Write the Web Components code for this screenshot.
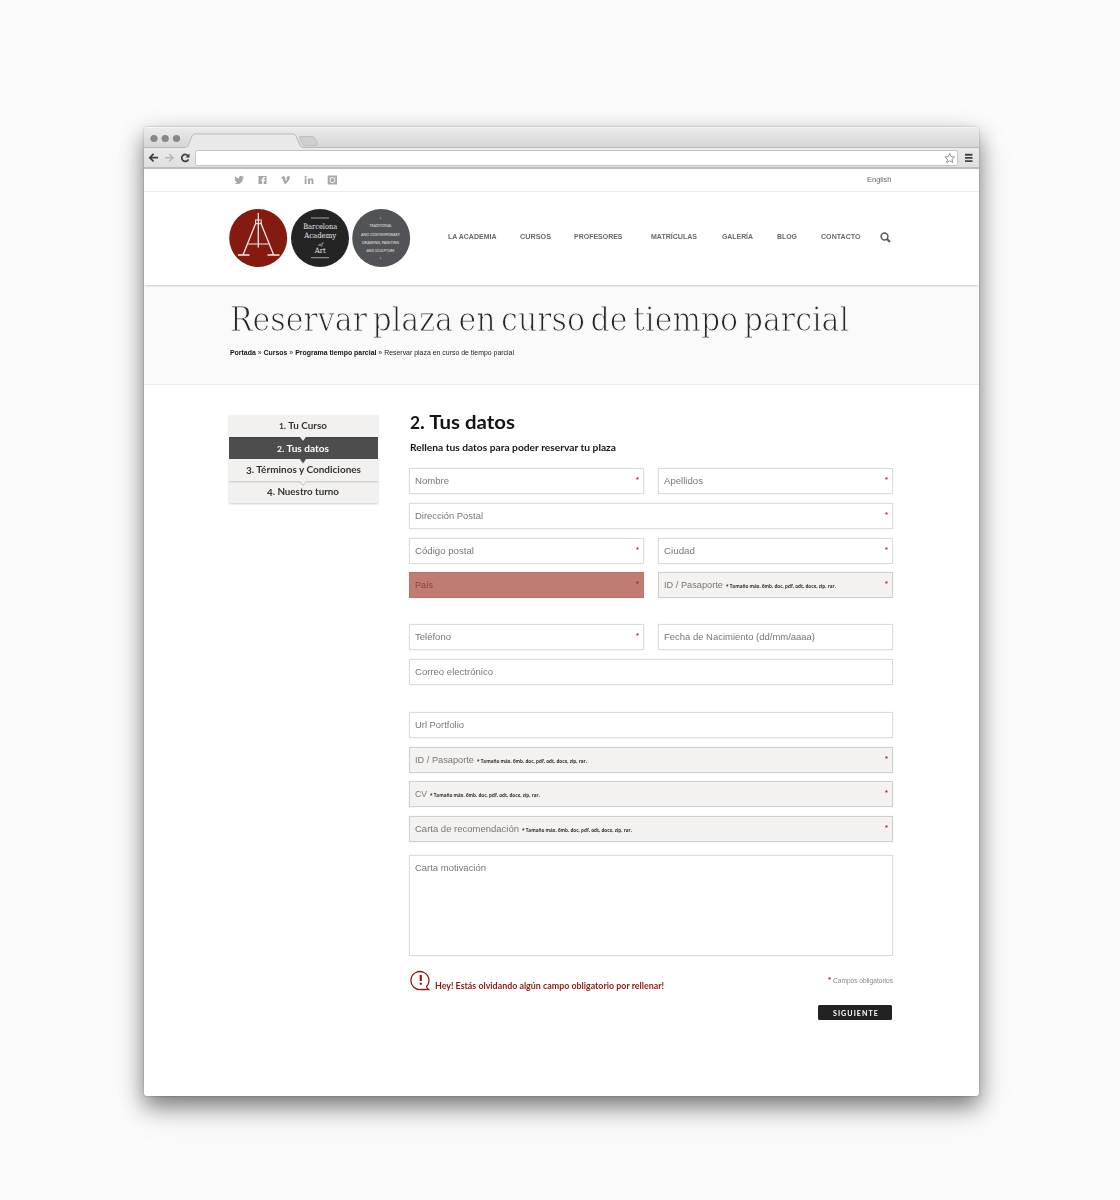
<!DOCTYPE html>
<html lang="es"><head><meta charset="utf-8"><title>Barcelona Academy of Art</title>
<style>
html,body{margin:0;height:1200px;overflow:hidden;background:#fbfbfb}
body{font-family:"Liberation Sans",Arial,sans-serif;padding:127px 0 0 144px;box-sizing:border-box}
</style></head><body>
<browser-window>
  <social-bar></social-bar>
  <site-header></site-header>
  <page-title></page-title>
  <main-content></main-content>
</browser-window>
<script>
const define=(name,html,after)=>customElements.define(name,class extends HTMLElement{
  constructor(){super();this.attachShadow({mode:'open'})}
  connectedCallback(){
    if(this.shadowRoot.childNodes.length)return;
    this.shadowRoot.innerHTML=typeof html==='function'?html(this):html;
    if(after)after(this);
  }
});

/* Text set to an exact width, scaled horizontally from its natural width. */
define('fit-text',`<style>:host{display:inline-block;white-space:nowrap;flex:none}span{display:inline-block;transform-origin:0 50%}</style><span><slot></slot></span>`,el=>{
  const w=+el.getAttribute('w'),s=el.shadowRoot.querySelector('span');
  const n=s.getBoundingClientRect().width;
  el.style.width=w+'px';
  if(n)s.style.transform=`scaleX(${w/n})`;
});

define('browser-chrome',`<style>
:host{display:block;height:41.500px;box-sizing:border-box;border-bottom:2px solid #bdbdbd;background:#e8e8e8;border-radius:3px 3px 0 0;overflow:hidden}
svg{display:block}</style>
<svg width="835" height="40" viewBox="0 0 835 40">
<defs><linearGradient id="a" x2="0" y2="1"><stop stop-color="#ececec"/><stop offset="1" stop-color="#d6d6d6"/></linearGradient>
<linearGradient id="b" x2="0" y2="1"><stop stop-color="#ebebeb"/><stop offset="1" stop-color="#dfdfdf"/></linearGradient></defs>
<rect width="835" height="20" fill="url(#a)"/><path d="M2 .5H833" stroke="#f5f5f5"/>
<rect y="20" width="835" height="20" fill="url(#b)"/>
<path d="M0 20.500H41.500C43.500 20.500 44 19 44.500 17.500L48 9Q49 7 51 7H149Q151 7 152 9L156 18.500Q157 20.500 159 20.500H835" fill="#e9e9e9" stroke="#b9b9b9"/>
<path d="M42 21.500H158" stroke="#e9e9e9" stroke-width="2"/>
<path d="M155.500 10.500Q155 9.500 156 9.500H168Q170 9.500 171 11L173.500 17Q174 18.500 172.500 18.500H161Q159 18.500 158.500 17Z" fill="#cfcfcf" stroke="#bababa" stroke-width=".8"/>
<g fill="#87868b"><circle cx="10" cy="11.500" r="3.600"/><circle cx="21.200" cy="11.500" r="3.600"/><circle cx="32.500" cy="11.500" r="3.600"/></g>
<g fill="none" stroke-width="1.700"><path stroke="#3e3e3e" d="M14 30.700H6M9.600 26.900L5.800 30.700L9.600 34.500"/><path stroke="#b9b9b9" stroke-width="1.500" d="M21 30.700H28.500M25.200 27L29 30.700L25.200 34.400"/><path stroke="#3e3e3e" d="M44.300 29.200A3.500 3.500 0 1 0 44.500 32.300"/></g><path d="M45.500 26.500V30.500H41.500Z" fill="#3e3e3e"/>
<rect x="51.500" y="23.500" width="762" height="15" rx="2" fill="#fff" stroke="#c3c3c3"/>
<path d="M805.700 26.500L807.100 29.600L810.500 30L808 32.300L808.700 35.500L805.700 33.800L802.700 35.500L803.400 32.300L800.900 30L804.300 29.600Z" fill="#fff" stroke="#929292"/>
<path d="M821 27.700H828.500M821 30.900H828.500M821 34.100H828.500" stroke="#434343" stroke-width="1.900"/>
</svg>`);

define('browser-window',`<style>
:host{display:block;width:834.500px;height:969px;background:#fff;border-radius:4px 4px 3px 3px;box-shadow:0 0 2px rgba(0,0,0,.3),0 10px 22px rgba(0,0,0,.48),0 14px 40px rgba(0,0,0,.1)}
</style><browser-chrome></browser-chrome><slot></slot>`);

define('social-bar',`<style>
:host{display:flex;height:23.500px;box-sizing:border-box;border-bottom:1px solid #ececec;padding:0 87.500px 0 89px;align-items:center;justify-content:space-between;font-size:7.500px;color:#666}
svg{display:block}</style>
<svg width="106" height="14" viewBox="0 0 106 14" fill="#a7a7a7">
<path d="M1 10.300Q3.200 10.500 4.300 9.600Q2.800 9.300 2.400 8.100H3.200Q1.600 7.400 1.500 5.900L2.300 6.100Q1 4.900 1.800 3.300Q3.600 5.300 5.900 5.400Q5.600 2.900 7.700 2.800Q8.600 2.800 9.200 3.400L10.500 2.900L9.800 4.100L11 3.800L9.900 5Q9.800 9.300 6.500 10.700Q3.500 11.700 1 10.300Z"/>
<path d="M25.500 3H33.500V11H30.700V8.200H31.900L32.100 6.800H30.700V6Q30.700 5.300 31.400 5.300H32.200V4.100H31Q29.200 4.100 29.200 5.900V6.800H28.300V8.200H29.200V11H25.500Z"/>
<path d="M48 4.700L50.500 3Q51.800 2.700 52.100 4.700L52.700 7.700Q53.100 8.500 54 6.300Q54.300 5.400 53.200 5.700Q53.700 3 55.900 3Q57.700 3.300 56.300 6.300Q54.700 9.900 52.500 11Q51.200 11.200 50.600 9.100L49.700 5.700Q49.400 5 48.500 5.500Z"/>
<rect x="71.700" y="5.500" width="1.900" height="5.500"/><circle cx="72.600" cy="3.800" r="1.100"/><path d="M75 5.500H76.800V6.300Q79.800 3.900 80.500 7.200V11H78.600V7.900Q78.200 6 76.900 7.700V11H75Z"/>
<rect x="94.700" y="2.500" width="9.300" height="9"/><g fill="none" stroke="#fff"><circle cx="99.400" cy="7.200" r="2.500"/><path d="M96.500 4.300H97.500M101.500 4.300H102.500" stroke-width=".8"/></g>
</svg><fit-text w="24.500">English</fit-text>`);

define('academy-logo',`<style>:host{display:block}svg{display:block}text{text-anchor:middle;fill:#e4e4e4}</style>
<svg width="182" height="58" viewBox="0 0 182 58">
<circle cx="29.200" cy="29" r="29" fill="#851a10"/><circle cx="91" cy="29" r="29" fill="#242424"/><circle cx="152.200" cy="29" r="29" fill="#525357"/>
<g fill="none" stroke="#f6e9e7" stroke-width="1.300"><path d="M29.300 4V38.500M27 13.500L14.200 45.500M31.600 13.500L44.500 45.500M9 46H20.500M38.500 46H50.500"/><path d="M26.600 10.500V14.700H32.200V10.500M27 11H31.700M18 35H40.500" stroke-width="1"/></g>
<path d="M82 9H100M82 48.700H100" stroke="#ddd" stroke-width=".7"/>
<g font-family="'DejaVu Serif'" font-size="7.500" ><text x="91.200" y="20" textLength="34" lengthAdjust="spacingAndGlyphs">Barcelona</text><text x="91.200" y="29" textLength="32" lengthAdjust="spacingAndGlyphs">Academy</text><text x="91.700" y="37" font-size="4.500" font-style="italic">of</text><text x="91.200" y="44.300" textLength="11" lengthAdjust="spacingAndGlyphs">Art</text></g>
<g font-family="Lato,sans-serif" font-size="3.900"><text x="151.500" y="18.400" textLength="22.500" lengthAdjust="spacingAndGlyphs">TRADITIONAL</text><text x="151.500" y="26.700" textLength="39" lengthAdjust="spacingAndGlyphs">AND CONTEMPORARY</text><text x="151.500" y="35" textLength="37" lengthAdjust="spacingAndGlyphs">DRAWING, PAINTING</text><text x="151.500" y="43.400" textLength="28" lengthAdjust="spacingAndGlyphs">AND SCULPTURE</text></g>
<circle cx="151.700" cy="9" r=".6" fill="#ddd"/><circle cx="151.700" cy="49" r=".6" fill="#ddd"/>
</svg>`);

define('site-header',`<style>
:host{display:flex;height:93px;box-sizing:border-box;padding:0 0 1px 85px;align-items:center;box-shadow:0 2px 2px -1px rgba(0,0,0,.2);position:relative}
nav{display:flex;margin-left:37px;align-items:center;font:bold 7px/10px "Liberation Sans",sans-serif;color:#6b6866;margin-top:-2px}
svg{margin-left:20px}</style>
<academy-logo></academy-logo>
<nav><fit-text w="48.500">LA ACADEMIA</fit-text><fit-text w="31" style="margin-left:23.500px">CURSOS</fit-text><fit-text w="48.500" style="margin-left:23px">PROFESORES</fit-text><fit-text w="46" style="margin-left:28.500px">MATRÍCULAS</fit-text><fit-text w="31" style="margin-left:24.500px">GALERÍA</fit-text><fit-text w="20" style="margin-left:24.500px">BLOG</fit-text><fit-text w="39.500" style="margin-left:23.500px">CONTACTO</fit-text>
<svg width="11" height="11" viewBox="0 0 11 11" fill="none" stroke="#5e5c5b"><circle cx="4.500" cy="4.500" r="3.400" stroke-width="1.500"/><path d="M7 7L10 10" stroke-width="2.200"/></svg></nav>`);

define('page-title',`<style>
:host{display:block;height:100px;box-sizing:border-box;background:#fafafa;border-bottom:1px solid #ececec;padding:15px 0 0 86px}
h1{margin:0;height:40px;font:400 33.600px/40px "DejaVu Serif Condensed","DejaVu Serif",serif;color:#262626;-webkit-text-stroke:.95px #fafafa;word-spacing:-4px}
p{margin:8px 0 0;font-size:7px;line-height:9px;color:#222;display:flex}
b{color:#111}</style>
<h1><fit-text w="619">Reservar plaza en curso de tiempo parcial</fit-text></h1>
<p><fit-text w="284"><b>Portada</b> » <b>Cursos</b> » <b>Programa tiempo parcial</b> » Reservar plaza en curso de tiempo parcial</fit-text></p>`);

define('step-item',e=>`<style>
:host{display:flex;justify-content:center;position:relative;box-sizing:border-box;height:21.700px;padding-top:1px;background:#f2f1f0;color:#333;font:bold 9.300px/20px Lato,sans-serif;box-shadow:0 1px 2px rgba(0,0,0,.2)}
:host([active]){background:#4d4d4d;color:#fff;height:22.500px;padding-top:2px;box-shadow:none}
:host(:not(:last-child))::after{content:"";position:absolute;top:100%;left:50%;margin-left:-3.500px;border:3.500px solid transparent;border-bottom:0;border-top:4.500px solid #f2f1f0;filter:drop-shadow(0 1px .5px rgba(0,0,0,.2))}
:host([active])::after{border-top-color:#4d4d4d!important}
.x{font-size:.85em}.d{vertical-align:-1px;line-height:1}</style>
<fit-text w="${e.getAttribute('w')}"><span class="${+e.getAttribute('n')<3?'x':'d'}">${e.getAttribute('n')}</span>. ${e.getAttribute('label')}</fit-text>`);

define('step-list',`<style>:host{display:block;width:148.500px}</style>
<step-item style="z-index:3" n="1" label="Tu Curso" w="48"></step-item><step-item style="z-index:2" active n="2" label="Tus datos" w="52"></step-item><step-item style="z-index:1" n="3" label="Términos y Condiciones" w="115"></step-item><step-item n="4" label="Nuestro turno" w="72"></step-item>`);

define('form-field',e=>`<style>
:host{display:flex;box-sizing:border-box;height:26px;border:1px solid #dcdcdc;box-shadow:0 0 1px #e2e2e2;background:#fff;padding:0 4px 0 5px;justify-content:space-between;font:9.300px/24px "Liberation Sans",sans-serif;color:#777}
:host([wide]){grid-column:1/3}
:host([file]){background:#f3f2f1;border-color:#cfcfcf}
:host([error]){background:#c07c70;border-color:#bd7265;color:#8c4339}
:host([area]){height:101px}
span{display:flex}.h{margin-left:3px;padding-top:1px;font:bold 5px/25px "Open Sans",sans-serif;color:#333}
i{font:bold 7.500px/22px "Liberation Sans";color:#b2281c}
</style><span><fit-text w="${e.getAttribute('w')}">${e.getAttribute('label')}</fit-text>${e.hasAttribute('file')?'<fit-text class="h" w="110">* Tamaño máx. 6mb. doc, pdf, odt, docx, zip, rar.</fit-text>':''}</span>${e.hasAttribute('req')?'<i>*</i>':''}`);

define('main-content',`<style>
:host{display:flex;padding:30px 0 0 85px;align-items:flex-start}
section{width:484px;margin-left:31.500px;margin-top:-6px}
h2{margin:0;font:bold 19.500px/26px Lato,sans-serif;color:#141414;padding-left:1px}
h2 span{font-size:.85em}
h3{margin:4.500px 0 0 1px;font:bold 9.600px/14px Lato,sans-serif;color:#141414}
.grid{display:grid;grid-template-columns:235px 235px;gap:8.800px 14px;margin-top:13.500px}
.foot{display:flex;justify-content:space-between;margin-top:14.500px}
.msg{display:flex;color:#8f1a10;font:bold 8.700px/12px Lato,sans-serif;gap:4px;padding-left:1px}
.msg fit-text{margin-top:9.500px}
.req{display:flex;font-size:6.500px;line-height:10px;color:#888;margin-top:6px;gap:2px}.req b{color:#b2281c;font-size:8px;line-height:7px}
button{display:flex;justify-content:center;align-items:center;margin:13.500px 1.500px 0 auto;width:73.500px;height:14.500px;border:0;border-radius:1.500px;padding:0;background:#222;color:#fff;font:bold 6.800px/14px Lato,sans-serif;letter-spacing:1px}
</style>
<step-list></step-list>
<section><h2><fit-text w="105"><span>2</span>. Tus datos</fit-text></h2><h3><fit-text w="206">Rellena tus datos para poder reservar tu plaza</fit-text></h3>
<div class="grid">
<form-field label="Nombre" w="34" req></form-field><form-field label="Apellidos" w="39" req></form-field>
<form-field wide label="Dirección Postal" w="68" req></form-field>
<form-field label="Código postal" w="59" req></form-field><form-field label="Ciudad" w="31" req></form-field>
<form-field error label="País" w="18" req></form-field><form-field file label="ID / Pasaporte" w="59" req></form-field>
<form-field style="margin-top:17px" label="Teléfono" w="36" req></form-field><form-field style="margin-top:17px" label="Fecha de Nacimiento (dd/mm/aaaa)" w="151"></form-field>
<form-field wide label="Correo electrónico" w="78"></form-field>
<form-field style="margin-top:18px" wide label="Url Portfolio" w="49"></form-field>
<form-field wide file label="ID / Pasaporte" w="59" req></form-field>
<form-field wide file label="CV" w="12" req></form-field>
<form-field wide file label="Carta de recomendación" w="104" req></form-field>
<form-field style="margin-top:4px" wide area label="Carta motivación" w="71"></form-field>
</div>
<div class="foot"><div class="msg"><svg width="21" height="21" viewBox="0 0 21 21" fill="none" stroke="#8f1a10"><path d="M18.500 19.500H11A9 9 0 1 1 16.500 16.700Q17 18.500 18.500 19.500Z" stroke-width="1.300"/><path d="M10.800 5V11M10.800 12.700V14.700" stroke-width="2.200"/></svg><fit-text w="229">Hey! Estás olvidando algún campo obligatorio por rellenar!</fit-text></div>
<div class="req"><b>*</b><fit-text w="60">Campos obligatorios</fit-text></div></div>
<button><fit-text w="46">SIGUIENTE</fit-text></button>
</section>`);
</script></body></html>
